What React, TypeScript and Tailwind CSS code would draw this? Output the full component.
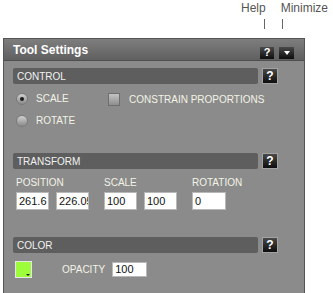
import React from 'react';

const font = "font-['Liberation_Sans',Arial,sans-serif]";

const HelpButton: React.FC<{ small?: boolean }> = ({ small }) => (
  <div
    className={`flex items-center justify-center bg-gradient-to-b from-[#4a4a4a] to-[#0e0e0e] text-white font-bold ${
      small ? 'w-[14px] h-[12px] text-[11px] leading-none' : 'w-[16px] h-[16px] text-[12px] leading-none border border-[#a2a2a2]'
    }`}
  >
    ?
  </div>
);

const SectionBar: React.FC<{ title: string }> = ({ title }) => (
  <div className="flex items-center gap-[4px]">
    <div className="w-[245px] h-[16px] rounded-[2px] bg-[#5e5e5e] pl-[4px] flex items-center text-[10px] text-[#f2f2f2]">
      {title}
    </div>
    <HelpButton />
  </div>
);

const Field: React.FC<{ value: string; w?: string }> = ({ value, w = 'w-[33px]' }) => (
  <input
    readOnly
    value={value}
    className={`${w} h-[18px] bg-white border border-[#b8b8b8] pl-[2px] text-[11px] text-[#111] outline-none ${font}`}
  />
);

const Radio: React.FC<{ checked?: boolean; label: string }> = ({ checked, label }) => (
  <div className="flex items-center gap-[8px]">
    <div className="w-[12px] h-[12px] rounded-full bg-gradient-to-b from-[#d2d2d2] to-[#8a8a8a] border border-[#7a7a7a] flex items-center justify-center">
      {checked && <div className="w-[4px] h-[4px] rounded-full bg-[#1a1a1a]" />}
    </div>
    <span className="text-[10px] leading-[12px] text-[#f3f3e6]">{label}</span>
  </div>
);

export default function App() {
  return (
    <div className={`w-[333px] h-[293px] overflow-hidden bg-white ${font}`}>
      <div className="h-[38px] flex pl-[241px] pt-[1px] text-[12px] text-[#555] font-light">
        <div className="flex flex-col">
          <span className="leading-[14px]">Help</span>
          <div className="ml-[23px] mt-[4px] w-px h-[10px] bg-[#666]" />
        </div>
        <div className="flex flex-col ml-[15px]">
          <span className="leading-[14px]">Minimize</span>
          <div className="ml-[1px] mt-[4px] w-px h-[10px] bg-[#666]" />
        </div>
      </div>

      <div className="ml-[3px] w-[302px] h-[260px] bg-[#8b8b8b] border-l border-r border-t border-[#555]">
        <div className="h-[22px] bg-gradient-to-b from-[#7e7e7e] to-[#606060] border-b border-[#4e4e4e] flex items-center pl-[9px] pr-[10px]">
          <span className="text-[12px] font-bold text-white">Tool Settings</span>
          <div className="ml-auto flex gap-[5px] mt-[6px]">
            <HelpButton small />
            <div className="w-[15px] h-[12px] bg-gradient-to-b from-[#4a4a4a] to-[#0e0e0e] flex items-center justify-center">
              <div className="w-0 h-0 border-l-[3px] border-r-[3px] border-t-[4px] border-l-transparent border-r-transparent border-t-white" />
            </div>
          </div>
        </div>

        <div className="pl-[9px] pt-[7px]">
          <SectionBar title="CONTROL" />
          <div className="ml-[3px] mt-[9px] flex">
            <div className="flex flex-col gap-[10px] w-[92px]">
              <Radio checked label="SCALE" />
              <Radio label="ROTATE" />
            </div>
            <div className="flex items-start gap-[9px]">
              <div className="w-[12px] h-[13px] bg-gradient-to-b from-[#c4c4c4] to-[#8e8e8e] border border-[#6e6e6e]" />
              <span className="text-[10px] leading-[13px] text-[#f3f3e6]">CONSTRAIN PROPORTIONS</span>
            </div>
          </div>

          <div className="mt-[26px]">
            <SectionBar title="TRANSFORM" />
          </div>
          <div className="ml-[3px] mt-[8px] flex gap-[15px] text-[10px] leading-[12px] text-[#f3f3e6]">
            <div className="flex flex-col gap-[3px]">
              <span>POSITION</span>
              <div className="flex gap-[7px]">
                <Field value="261.6" />
                <Field value="226.05" />
              </div>
            </div>
            <div className="flex flex-col gap-[3px]">
              <span>SCALE</span>
              <div className="flex gap-[7px]">
                <Field value="100" />
                <Field value="100" />
              </div>
            </div>
            <div className="flex flex-col gap-[3px]">
              <span>ROTATION</span>
              <Field value="0" w="w-[34px]" />
            </div>
          </div>

          <div className="mt-[27px]">
            <SectionBar title="COLOR" />
          </div>
          <div className="ml-[2px] mt-[8px] flex items-center">
            <div className="relative w-[17px] h-[17px] bg-[#9dfd3a] border border-[#e6e6e6]">
              <div className="absolute right-[1px] bottom-[1px] w-0 h-0 border-l-[2px] border-r-[2px] border-t-[2px] border-l-transparent border-r-transparent border-t-[#222]" />
            </div>
            <span className="ml-[30px] text-[10px] text-[#f3f3e6]">OPACITY</span>
            <input
              readOnly
              value="100"
              className={`ml-[7px] w-[35px] h-[15px] bg-white border border-[#b8b8b8] pl-[2px] text-[11px] text-[#111] outline-none ${font}`}
            />
          </div>
        </div>
      </div>
    </div>
  );
}
